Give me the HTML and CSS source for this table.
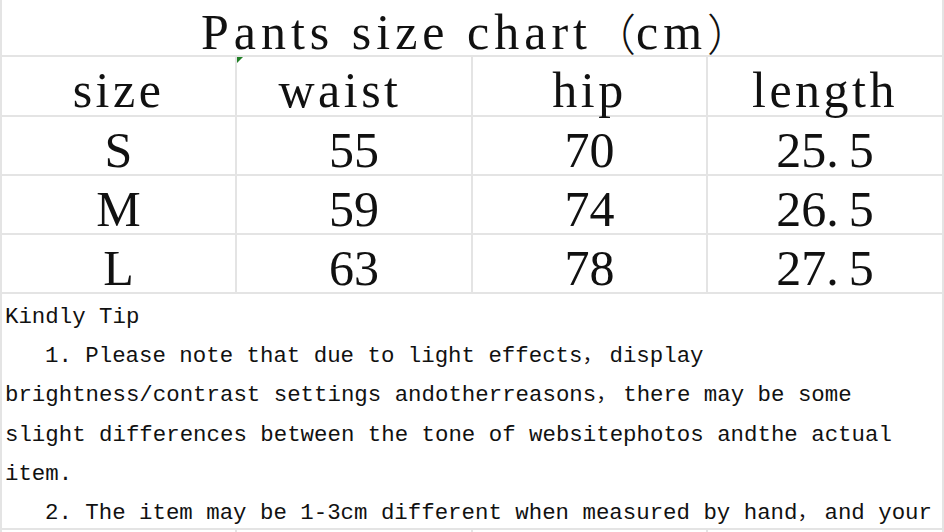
FILE: index.html
```html
<!DOCTYPE html>
<html lang="en">
<head>
<meta charset="utf-8">
<title>Pants size chart</title>
<link rel="stylesheet" href="styles.css">
</head>
<body>
<div class="sheet">
  <div class="title">Pants size chart<span class="paren">（</span>cm<span class="paren">）</span></div>
  <div class="row head">
    <div class="cell"><span>size</span></div>
    <div class="cell"><span class="waist">waist</span><i class="tri"></i></div>
    <div class="cell"><span>hip</span></div>
    <div class="cell"><span>length</span></div>
  </div>
  <div class="row">
    <div class="cell">S</div>
    <div class="cell">55</div>
    <div class="cell">70</div>
    <div class="cell">25<span class="pt">.</span>5</div>
  </div>
  <div class="row">
    <div class="cell">M</div>
    <div class="cell">59</div>
    <div class="cell">74</div>
    <div class="cell">26<span class="pt">.</span>5</div>
  </div>
  <div class="row">
    <div class="cell">L</div>
    <div class="cell">63</div>
    <div class="cell">78</div>
    <div class="cell">27<span class="pt">.</span>5</div>
  </div>
  <div class="tips">
    <p class="line">Kindly Tip</p>
    <p class="line item">1. Please note that due to light effects<span class="fw">，</span>display<br>brightness/contrast settings andotherreasons<span class="fw">，</span>there may be some<br>slight differences between the tone of websitephotos andthe actual<br>item.</p>
    <p class="line item">2. The item may be 1-3cm different when measured by hand<span class="fw">，</span>and your</p>
  </div>
  <div class="row tail">
    <div class="cell"></div>
    <div class="cell"></div>
    <div class="cell"></div>
    <div class="cell"></div>
  </div>
</div>
</body>
</html>
```

FILE: styles.css
```css
html, body {
  margin: 0;
  padding: 0;
  background: #ffffff;
}

body {
  width: 944px;
  height: 532px;
  overflow: hidden;
  color: #111111;
}

.sheet {
  box-sizing: border-box;
  width: 944px;
  border-left: 2px solid #e4e4e4;
  border-right: 2px solid #e4e4e4;
}

.title {
  height: 55px;
  border-bottom: 2px solid #e4e4e4;
  display: flex;
  align-items: flex-end;
  justify-content: center;
  padding-left: 8px;
  font-family: "Liberation Serif", "Times New Roman", serif;
  font-size: 50px;
  line-height: 46px;
  letter-spacing: 5px;
  white-space: pre;
}

.paren {
  font-family: "Noto Sans CJK SC", sans-serif;
  font-weight: 300;
  font-size: 44px;
  letter-spacing: 0;
}

.row {
  display: grid;
  grid-template-columns: 235px 236px 235px 234px;
  height: 59px;
}

.row.head {
  height: 60px;
}

.cell {
  position: relative;
  border-right: 2px solid #e4e4e4;
  border-bottom: 2px solid #e4e4e4;
  display: flex;
  align-items: flex-end;
  justify-content: center;
  padding-bottom: 1px;
  font-family: "Liberation Serif", "Times New Roman", serif;
  font-size: 50px;
  line-height: 46px;
  white-space: pre;
}

.row .cell:last-child {
  border-right: none;
}

.head .cell {
  padding-bottom: 2px;
  letter-spacing: 3.5px;
}

.waist {
  margin-right: 28px;
}

.pt {
  margin-right: 10px;
}

.tri {
  position: absolute;
  left: 0;
  top: 0;
  width: 0;
  height: 0;
  border-top: 6px solid #1f7f25;
  border-right: 6px solid transparent;
}

.tips {
  height: 230px;
  padding-top: 4px;
  padding-left: 3px;
  border-bottom: 2px solid #e4e4e4;
  font-family: "Liberation Mono", "Courier New", monospace;
  font-size: 22.4px;
  line-height: 39.2px;
}

.line {
  margin: 0;
  white-space: nowrap;
}

.item {
  text-indent: 40px;
}

.fw {
  display: inline-block;
  width: 27px;
  font-family: "Noto Sans CJK SC", sans-serif;
  font-size: 20px;
  line-height: 1;
  text-indent: 0;
}

.tail {
  height: 20px;
}

.tail .cell {
  border-bottom: none;
}
```
